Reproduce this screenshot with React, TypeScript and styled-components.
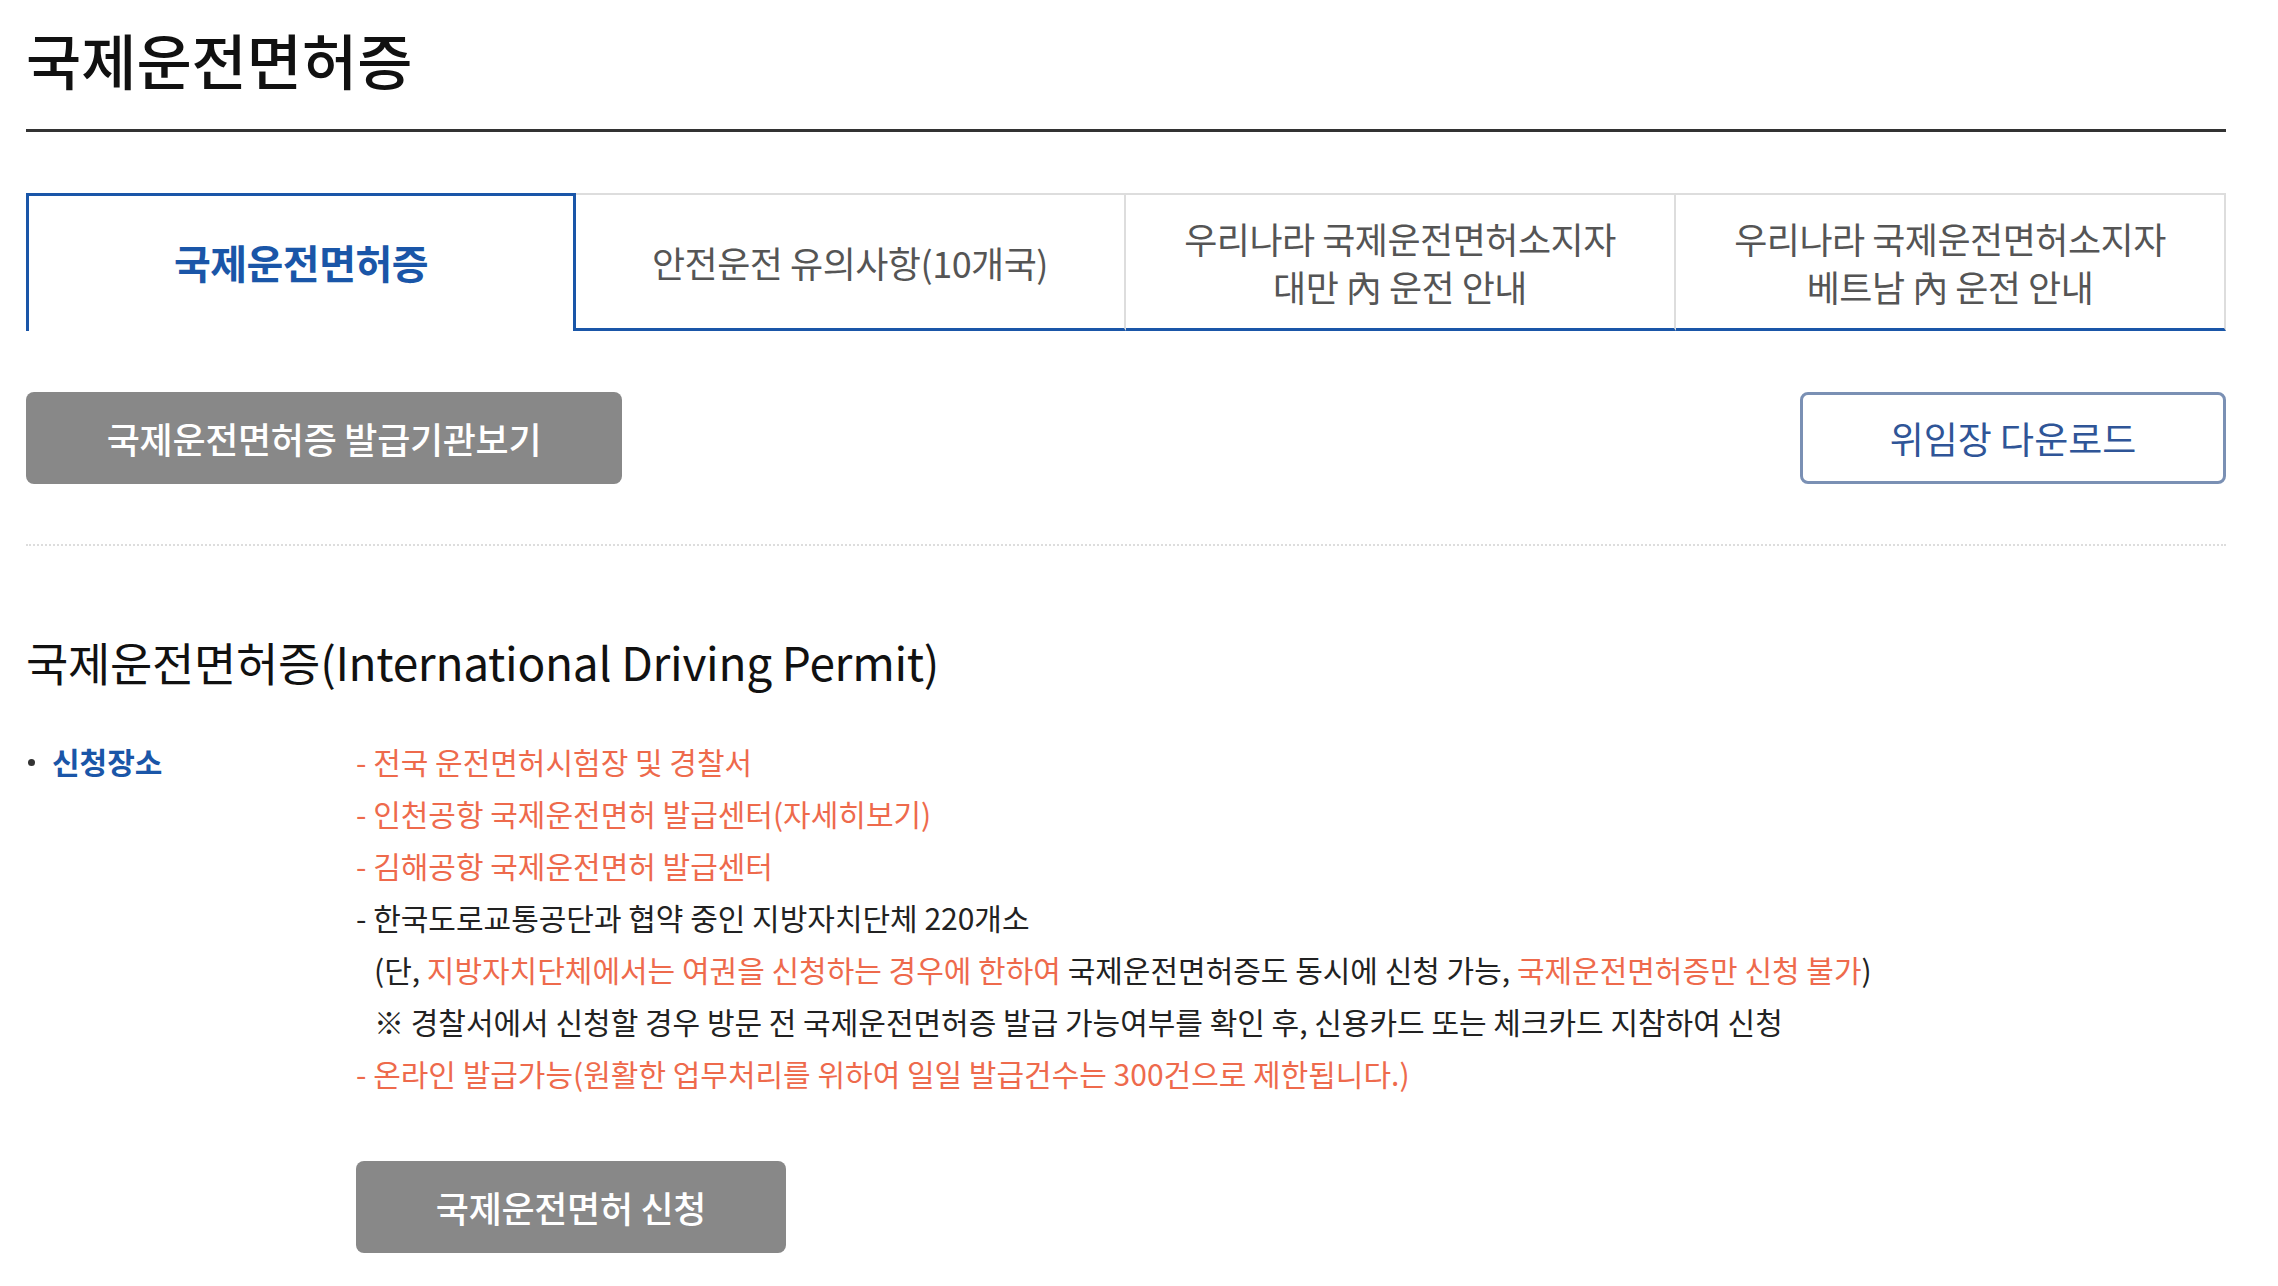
import React, { useState } from "react";
import styled, { createGlobalStyle } from "styled-components";

const GlobalStyle = createGlobalStyle`
  html, body {
    margin: 0;
    background: #ffffff;
  }
  body {
    font-family: "Noto Sans CJK KR", "Noto Sans", sans-serif;
    color: #222222;
  }
  * {
    box-sizing: border-box;
  }
`;

const BLUE = "#1a56a8";
const ORANGE = "#ee6a4c";

const tabs = [
  ["국제운전면허증"],
  ["안전운전 유의사항(10개국)"],
  ["우리나라 국제운전면허소지자", "대만 內 운전 안내"],
  ["우리나라 국제운전면허소지자", "베트남 內 운전 안내"],
];

const App = () => {
  const [active, setActive] = useState(0);

  return (
    <>
      <GlobalStyle />
      <Page>
        <PageHeader>
          <PageTitle>국제운전면허증</PageTitle>
        </PageHeader>

        <TabBar>
          {tabs.map((lines, i) => (
            <TabItem key={i} $active={active === i} onClick={() => setActive(i)}>
              {lines.map((line) => (
                <span key={line}>{line}</span>
              ))}
            </TabItem>
          ))}
        </TabBar>

        <ButtonRow>
          <GreyButton $width={596}>국제운전면허증 발급기관보기</GreyButton>
          <OutlineButton>위임장 다운로드</OutlineButton>
        </ButtonRow>

        <Divider />

        <SectionTitle>국제운전면허증(International Driving Permit)</SectionTitle>

        <InfoRow>
          <InfoLabel>신청장소</InfoLabel>
          <InfoBody>
            <Line $tone="orange">- 전국 운전면허시험장 및 경찰서</Line>
            <Line $tone="orange">- 인천공항 국제운전면허 발급센터(자세히보기)</Line>
            <Line $tone="orange">- 김해공항 국제운전면허 발급센터</Line>
            <Line>- 한국도로교통공단과 협약 중인 지방자치단체 220개소</Line>
            <Line $indent>
              (단, <Accent>지방자치단체에서는 여권을 신청하는 경우에 한하여</Accent>{" "}
              국제운전면허증도 동시에 신청 가능, <Accent>국제운전면허증만 신청 불가</Accent>)
            </Line>
            <Line $indent>
              ※ 경찰서에서 신청할 경우 방문 전 국제운전면허증 발급 가능여부를 확인 후,
              신용카드 또는 체크카드 지참하여 신청
            </Line>
            <Line $tone="orange">
              - 온라인 발급가능(원활한 업무처리를 위하여 일일 발급건수는 300건으로 제한됩니다.)
            </Line>
            <ApplyRow>
              <GreyButton $width={430}>국제운전면허 신청</GreyButton>
            </ApplyRow>
          </InfoBody>
        </InfoRow>
      </Page>
    </>
  );
};

export default App;

const Page = styled.div`
  width: 2252px;
  padding: 0 0 60px 26px;
  & > * {
    width: 2200px;
  }
`;

const PageHeader = styled.div`
  padding: 18px 0 29px;
  border-bottom: 3px solid #333333;
`;

const PageTitle = styled.h1`
  margin: 0;
  font-size: 60px;
  line-height: 82px;
  font-weight: 500;
  color: #111111;
`;

const TabBar = styled.div`
  display: grid;
  grid-template-columns: repeat(4, 1fr);
  margin-top: 61px;
  height: 138px;
`;

const TabItem = styled.div<{ $active: boolean }>`
  display: flex;
  flex-direction: column;
  align-items: center;
  justify-content: center;
  font-size: ${(p) => (p.$active ? "40px" : "36px")};
  line-height: 48px;
  letter-spacing: -0.5px;
  cursor: pointer;
  color: ${(p) => (p.$active ? BLUE : "#555555")};
  font-weight: ${(p) => (p.$active ? 700 : 400)};
  border-top: ${(p) => (p.$active ? `3px solid ${BLUE}` : "2px solid #dddddd")};
  border-left: ${(p) => (p.$active ? `3px solid ${BLUE}` : "none")};
  border-right: ${(p) => (p.$active ? `3px solid ${BLUE}` : "2px solid #dddddd")};
  border-bottom: ${(p) => (p.$active ? "none" : `3px solid ${BLUE}`)};
  padding-bottom: ${(p) => (p.$active ? "3px" : "0")};
`;

const ButtonRow = styled.div`
  display: flex;
  justify-content: space-between;
  margin-top: 61px;
`;

const GreyButton = styled.button<{ $width: number }>`
  width: ${(p) => p.$width}px;
  height: 92px;
  border: none;
  border-radius: 8px;
  background: #888888;
  color: #ffffff;
  font-family: inherit;
  font-size: 36px;
  font-weight: 500;
  letter-spacing: -0.3px;
  cursor: pointer;
`;

const OutlineButton = styled.button`
  width: 426px;
  height: 92px;
  border: 3px solid #7a90b4;
  border-radius: 8px;
  background: #ffffff;
  color: #2f5597;
  font-family: inherit;
  font-size: 37px;
  font-weight: 400;
  cursor: pointer;
`;

const Divider = styled.hr`
  margin: 60px 0 0;
  border: none;
  border-top: 2px dotted #dddddd;
  height: 0;
`;

const SectionTitle = styled.h2`
  margin: 82px 0 0;
  font-size: 46px;
  line-height: 66px;
  font-weight: 400;
  letter-spacing: -0.3px;
  color: #111111;
`;

const InfoRow = styled.div`
  display: flex;
  margin-top: 41px;
`;

const InfoLabel = styled.div`
  position: relative;
  flex: 0 0 330px;
  padding-left: 26px;
  font-size: 30px;
  line-height: 52px;
  font-weight: 700;
  color: ${BLUE};
  &::before {
    content: "";
    position: absolute;
    left: 2px;
    top: 24px;
    width: 7px;
    height: 7px;
    border-radius: 50%;
    background: #333333;
  }
`;

const InfoBody = styled.div`
  flex: 1;
`;

const Line = styled.p<{ $tone?: "orange"; $indent?: boolean }>`
  margin: 0;
  font-size: 30px;
  line-height: 52px;
  color: ${(p) => (p.$tone === "orange" ? ORANGE : "#222222")};
  padding-left: ${(p) => (p.$indent ? "18px" : "0")};
`;

const Accent = styled.span`
  color: ${ORANGE};
`;

const ApplyRow = styled.div`
  margin-top: 62px;
`;
